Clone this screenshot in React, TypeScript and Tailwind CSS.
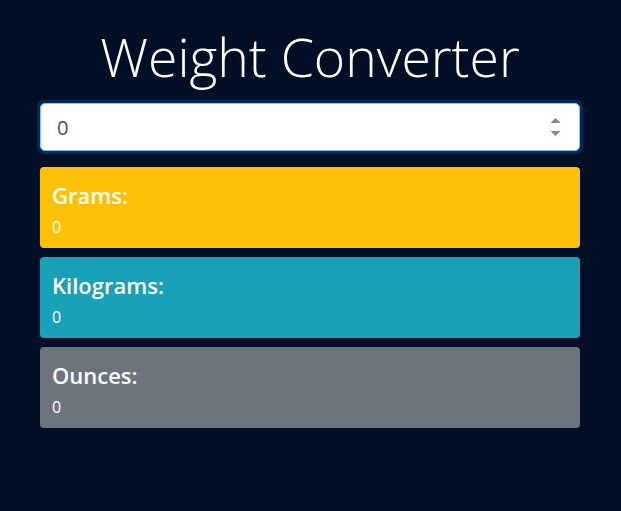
import React, { useState } from "react";

const App = () => {
  const [pounds, setPounds] = useState("0");

  const value = Number(pounds) || 0;
  const grams = value * 453.592;
  const kilograms = value / 2.2046;
  const ounces = value * 16;

  // cards for each unit
  const cards = [
    { label: "Grams:", result: grams, bg: "bg-[#ffc107]" },
    { label: "Kilograms:", result: kilograms, bg: "bg-[#17a2b8]" },
    { label: "Ounces:", result: ounces, bg: "bg-[#6c757d]" },
  ];

  return (
    <div className="min-h-[511px] bg-[#000f26] font-['Open_Sans',sans-serif]">
      <div className="ml-[40px] w-[540px] pt-[21px]">
        <h1 className="text-center text-[53.5px] font-light leading-[72px] text-white">
          Weight Converter
        </h1>
        <input
          type="number"
          autoFocus
          value={pounds}
          onChange={(e) => setPounds(e.target.value)}
          className="mt-[10px] block h-[48px] w-full rounded-[5px] border border-[#80bdff] bg-white px-4 text-[20px] text-[#495057] shadow-[0_0_0_3px_rgba(0,123,255,0.25)] outline-none"
        />
        <div className="mt-4 flex flex-col gap-[9px]">
          {cards.map((card) => (
            <div
              key={card.label}
              className={`${card.bg} h-[81px] rounded-[4px] px-3 pt-[12px] text-white`}
            >
              <h4 className="text-[22px] font-semibold leading-[32px]">
                {card.label}
              </h4>
              <p className="mt-[5px] text-[16px] leading-[22px]">
                {card.result}
              </p>
            </div>
          ))}
        </div>
      </div>
    </div>
  );
};

export default App;
